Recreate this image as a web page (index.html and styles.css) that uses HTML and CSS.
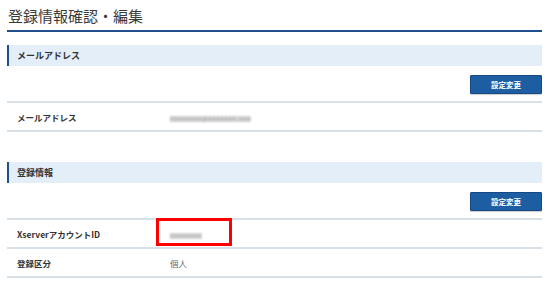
FILE: index.html
```html
<!DOCTYPE html>
<html lang="ja">
<head>
<meta charset="utf-8">
<link rel="stylesheet" href="styles.css">
</head>
<body>
<div class="page">
  <h1 class="title">登録情報確認・編集</h1>

  <section class="block block-first">
    <h2 class="sec-head">メールアドレス</h2>
    <div class="actions"><button class="btn">設定変更</button></div>
    <div class="rows">
      <div class="row"><div class="label">メールアドレス</div><div class="value"><span class="blur">xxxxxxxx@xxxxxxx.xxx</span></div></div>
    </div>
  </section>

  <section class="block block-second">
    <h2 class="sec-head">登録情報</h2>
    <div class="actions"><button class="btn">設定変更</button></div>
    <div class="rows">
      <div class="row"><div class="label">XserverアカウントID</div><div class="value"><span class="blur blur-id">xxxxxxxx</span></div></div>
      <div class="row"><div class="label">登録区分</div><div class="value">個人</div></div>
    </div>
    <div class="highlight"></div>
  </section>
</div>
</body>
</html>
```
FILE: styles.css
```css
* { box-sizing: border-box; }
html, body { margin: 0; padding: 0; background: #fff; }
body {
  font-family: "Noto Sans CJK JP", "Noto Sans", sans-serif;
  color: #333;
}
.page {
  width: 550px;
  padding: 0 8px 0 7px;
}
.title {
  margin: 0;
  height: 32px;
  padding: 6px 0 0 1px;
  font-size: 15px;
  font-weight: 400;
  line-height: 20px;
  color: #3a3a3a;
  border-bottom: 2px solid #1f4f8f;
}
.block { position: relative; }
.block-first { margin-top: 13px; }
.block-second { margin-top: 30px; }
.sec-head {
  margin: 0;
  height: 21px;
  background: #e4eef9;
  border-left: 2px solid #1f4f8f;
  padding-left: 8px;
  font-size: 9px;
  font-weight: 700;
  line-height: 21px;
  color: #333;
}
.actions {
  display: flex;
  justify-content: flex-end;
  padding: 9px 0 7px;
}
.btn {
  width: 72px;
  height: 19px;
  padding: 0;
  border: 1px solid #174a85;
  border-radius: 1px;
  background: #1d5ea3;
  color: #fff;
  font-family: inherit;
  font-size: 7.5px;
  font-weight: 700;
  line-height: 17px;
  box-shadow: 0 1px 1px rgba(0,0,0,0.2);
}
.rows { border-top: 2px solid #d8e0e8; }
.row {
  display: flex;
  align-items: center;
  height: 29px;
  border-bottom: 2px solid #d8e0e8;
  font-size: 8.5px;
}
.label {
  width: 163px;
  padding-left: 10px;
  font-weight: 700;
  color: #333;
}
.value { color: #666; }
.blur {
  display: inline-block;
  color: #999;
  background: #d6d6d6;
  filter: blur(1.2px);
  font-size: 6px;
  line-height: 6px;
  letter-spacing: 1px;
}
.blur-id { margin-top: 1px; }
.highlight {
  position: absolute;
  left: 149px;
  top: 56px;
  width: 76px;
  height: 28px;
  border: 3px solid #ff0000;
}
```
